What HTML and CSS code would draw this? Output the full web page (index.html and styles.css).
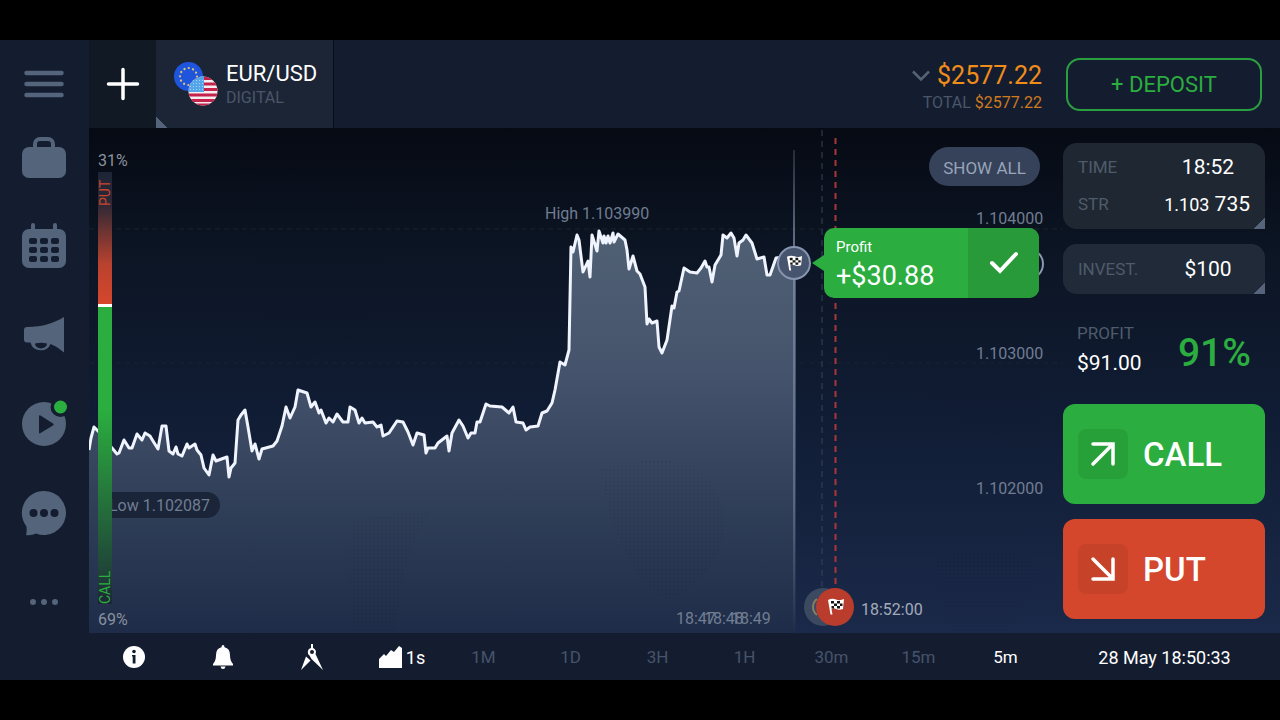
FILE: index.html
```html
<!DOCTYPE html>
<html lang="en">
<head>
    <meta charset="UTF-8">
    <meta name="viewport" content="width=device-width, initial-scale=1.0">
    <title>EUR/USD Digital</title>
    <link rel="stylesheet" href="styles.css">
</head>
<body>
    <div class="app">
        <nav class="sidebar">
            <button class="side-btn menu-btn" aria-label="Menu">
                <svg width="42" height="30" viewBox="0 0 42 30"><path d="M3.500 4H38.500M3.500 15H38.500M3.500 26H38.500" stroke="currentColor" stroke-width="4.500" stroke-linecap="round"/></svg>
            </button>
            <button class="side-btn" aria-label="Portfolio">
                <svg width="46" height="44" viewBox="0 0 46 44"><rect x="1" y="12" width="44" height="31" rx="7" fill="currentColor"/><path d="M14 13V9a5 5 0 0 1 5-5h8a5 5 0 0 1 5 5v4" fill="none" stroke="currentColor" stroke-width="4"/></svg>
            </button>
            <button class="side-btn" aria-label="Calendar">
                <svg width="46" height="46" viewBox="0 0 46 46"><rect x="1" y="6" width="44" height="39" rx="7" fill="currentColor"/><path d="M12 2v6M34 2v6" stroke="currentColor" stroke-width="4" stroke-linecap="round"/><g fill="#141d30"><rect x="8" y="15" width="8" height="6" rx="2"/><rect x="19" y="15" width="8" height="6" rx="2"/><rect x="30" y="15" width="8" height="6" rx="2"/><rect x="8" y="24" width="8" height="6" rx="2"/><rect x="19" y="24" width="8" height="6" rx="2"/><rect x="30" y="24" width="8" height="6" rx="2"/><rect x="8" y="33" width="8" height="6" rx="2"/><rect x="19" y="33" width="8" height="6" rx="2"/><rect x="30" y="33" width="8" height="6" rx="2"/></g></svg>
            </button>
            <button class="side-btn" aria-label="News">
                <svg width="42" height="38" viewBox="0 0 42 38"><path d="M4 11C20 11 31 7 41 1V36.500C36 32.500 32 29.500 27.500 28A10.500 10 0 0 1 7.500 26.500H4a3 3 0 0 1-3-3V14a3 3 0 0 1 3-3Z" fill="currentColor"/><path d="M12 27.500Q18 26 24 27.500A6 5 0 0 1 12 27.500Z" fill="#141d30"/></svg>
            </button>
            <button class="side-btn" aria-label="Video tutorials">
                <svg class="video" width="46" height="46" viewBox="0 0 46 46"><circle cx="23" cy="23" r="22" fill="currentColor"/><path d="M18 15.500V31.500Q18 33 19.500 32L32 24.500Q33.500 23.500 32 22.500L19.500 14.500Q18 13.500 18 15.500Z" fill="#141d30"/><circle cx="39.500" cy="6" r="10" fill="#141d30"/><circle class="dot" cx="39.500" cy="6" r="6.500"/></svg>
            </button>
            <button class="side-btn" aria-label="Chat">
                <svg width="46" height="46" viewBox="0 0 46 46"><path d="M23 1A22 22 0 1 1 15 43.500Q10 46 5 45Q6 42 5.500 36.500A22 22 0 0 1 23 1Z" fill="currentColor"/><g fill="#141d30"><circle cx="12.500" cy="23" r="4"/><circle cx="23" cy="23" r="4"/><circle cx="33.500" cy="23" r="4"/></g></svg>
            </button>
            <button class="side-btn" aria-label="More">
                <svg width="30" height="8" viewBox="0 0 30 8"><g fill="currentColor"><circle cx="4" cy="4" r="3"/><circle cx="15" cy="4" r="3"/><circle cx="26" cy="4" r="3"/></g></svg>
            </button>
        </nav>

        <div class="main">
            <header class="header">
                <button class="add-tab" aria-label="Add asset">
                    <svg width="34" height="34" viewBox="0 0 34 34"><path d="M17 2.500V31.500M2.500 17H31.500" stroke="#fff" stroke-width="3.500" stroke-linecap="round"/></svg>
                </button>
                <button class="asset-tab">
                    <svg width="44" height="44" viewBox="0 0 44 44">
                        <defs>
                            <clipPath id="us"><circle cx="29" cy="29" r="14.500"/></clipPath>
                        </defs>
                        <circle cx="14.500" cy="14.500" r="14.500" fill="#1f55dc"/>
                        <circle cx="14.500" cy="14.500" r="8.500" fill="none" stroke="#d8c679" stroke-width="2.200" stroke-dasharray="0.100 4.350" stroke-linecap="round"/>
                        <g clip-path="url(#us)">
                            <rect x="14" y="14" width="30" height="30" fill="#f4eef2"/>
                            <path d="M14 16.500H44M14 22H44M14 27.500H44M14 33H44M14 38.500H44M14 43H44" stroke="#c4214b" stroke-width="2.800"/>
                            <rect x="14" y="14" width="16" height="16" fill="#55a5ea"/>
                            <path d="M16 18.500H30M16 21.500H30M16 24.500H30M16 27.500H30" stroke="#a5d2f5" stroke-width="1" stroke-dasharray="1 2"/>
                        </g>
                    </svg>
                    <span class="asset-text">
                        <span class="asset-name">EUR/USD</span>
                        <span class="asset-type">DIGITAL</span>
                    </span>
                </button>
                <div class="account">
                    <button class="balance">
                        <svg width="20" height="12" viewBox="0 0 20 12"><path d="M2 1.500L10 9.500L18 1.500" fill="none" stroke="#566376" stroke-width="2.500"/></svg>
                        $2577.22
                    </button>
                    <div class="total">TOTAL <span>$2577.22</span></div>
                </div>
                <button class="deposit">+ DEPOSIT</button>
            </header>

            <section class="stage">
                <svg class="chart" viewBox="89 128 1191 505" preserveAspectRatio="xMidYMid slice">
                    <defs>
                        <linearGradient id="area" gradientUnits="userSpaceOnUse" x1="0" y1="230" x2="0" y2="633">
                            <stop offset="0" stop-color="#506074"/>
                            <stop offset="0.350" stop-color="#45546c"/>
                            <stop offset="0.620" stop-color="#34435b"/>
                            <stop offset="1" stop-color="#1e2c49"/>
                        </linearGradient>
                        <linearGradient id="putBar" x1="0" y1="0" x2="0" y2="1">
                            <stop offset="0" stop-color="#d5472d" stop-opacity="0"/>
                            <stop offset="0.250" stop-color="#d5472d" stop-opacity="0.100"/>
                            <stop offset="0.700" stop-color="#d5472d" stop-opacity="0.850"/>
                            <stop offset="1" stop-color="#d5472d"/>
                        </linearGradient>
                        <linearGradient id="callBar" x1="0" y1="0" x2="0" y2="1">
                            <stop offset="0" stop-color="#2bad3f"/>
                            <stop offset="0.350" stop-color="#2bad3f"/>
                            <stop offset="0.880" stop-color="#2bad3f" stop-opacity="0.250"/>
                            <stop offset="1" stop-color="#2bad3f" stop-opacity="0"/>
                        </linearGradient>
                        <linearGradient id="nowLine" gradientUnits="userSpaceOnUse" x1="0" y1="150" x2="0" y2="633">
                            <stop offset="0" stop-color="#66758c" stop-opacity="0.300"/>
                            <stop offset="0.250" stop-color="#74839b"/>
                            <stop offset="0.700" stop-color="#5c6b83"/>
                            <stop offset="1" stop-color="#5c6b83" stop-opacity="0"/>
                        </linearGradient>
                        <pattern id="dots" width="4" height="4" patternUnits="userSpaceOnUse">
                            <circle cx="2" cy="2" r="1" fill="#0a1222"/>
                        </pattern>
                        <symbol id="flag" viewBox="0 0 18 18">
                            <path d="M1 3Q5 1 9 2.500T17 2L16 12Q12 13.500 9 12T4.500 12.500L5.500 17.500H3.500Z" fill="#fff"/>
                            <path d="M4 4h3v2.500H4zM10 4h3v2.500h-3zM7 6.500h3V9H7zM13 6.500h2.500V9H13zM4.500 9H7v2.500H4.500zM10 9h3v2.500h-3z" fill="#161616"/>
                        </symbol>
                    </defs>

                    <path class="grid-line" d="M89 229H1063M89 363H1063"/>
                    <path fill="url(#area)" d="M89 450L91 438L94 427L99 432L105 440L112 448L117 454L119 453L124 440L129 448L132 448L137 434L142 440L145 433L150 436L153 441L158 449L162 426L166 426L169 451L173 454L176 447L178 454L182 456L187 444L189 448L195 444L197 450L201 455L204 468L209 475L213 455L216 461L227 457L229 477L231 468L235 463L238 420L241 415L245 410L248 427L252 451L255 444L259 459L262 449L273 446L277 441L282 426L286 407L290 418L295 407L298 390L307 393L311 407L315 402L319 413L321 410L326 423L329 418L333 422L337 414L343 422L348 422L350 407L355 410L359 423L362 418L365 423L373 422L377 427L381 425L383 436L389 433L397 421L403 422L408 432L413 445L417 433L424 435L426 453L428 448L435 448L438 443L447 436L449 451L452 433L459 420L463 426L468 438L471 433L475 433L477 422L480 422L486 404L490 406L502 407L509 413L513 407L516 422L523 423L526 430L530 427L538 426L542 413L547 411L552 403L555 390L560 362L565 365L569 350L571 247L573 252L577 235L579 240L583 272L588 261L590 277L592 235L597 251L599 231L603 243L604 236L606 243L608 236L610 243L613 233L614 242L618 234L625 240L627 250L629 269L633 256L637 271L640 274L645 287L647 324L649 319L652 323L657 321L659 347L662 353L667 340L672 306L674 308L677 292L679 291L684 268L690 272L697 273L701 268L705 261L707 267L709 267L712 282L715 265L721 255L723 235L727 238L731 233L734 238L737 256L739 243L743 240L746 235L752 243L757 259L764 257L767 275L770 275L776 258L783 257L796 262V633H89Z"/>
                    <g fill="url(#dots)" opacity="0.120">
                        <path d="M230 175Q330 150 370 240T300 360Q260 330 250 270Z"/>
                        <path d="M350 520L430 510Q400 560 395 633H350Z"/>
                        <path d="M600 470Q700 440 720 500T670 600Q620 580 600 470Z"/>
                        <path d="M880 350Q960 300 1040 340V450Q940 430 880 350Z"/>
                        <path d="M935 560Q1000 530 1040 570L1010 633H950Z"/>
                    </g>
                    <path class="price-line" d="M89 450L91 438L94 427L99 432L105 440L112 448L117 454L119 453L124 440L129 448L132 448L137 434L142 440L145 433L150 436L153 441L158 449L162 426L166 426L169 451L173 454L176 447L178 454L182 456L187 444L189 448L195 444L197 450L201 455L204 468L209 475L213 455L216 461L227 457L229 477L231 468L235 463L238 420L241 415L245 410L248 427L252 451L255 444L259 459L262 449L273 446L277 441L282 426L286 407L290 418L295 407L298 390L307 393L311 407L315 402L319 413L321 410L326 423L329 418L333 422L337 414L343 422L348 422L350 407L355 410L359 423L362 418L365 423L373 422L377 427L381 425L383 436L389 433L397 421L403 422L408 432L413 445L417 433L424 435L426 453L428 448L435 448L438 443L447 436L449 451L452 433L459 420L463 426L468 438L471 433L475 433L477 422L480 422L486 404L490 406L502 407L509 413L513 407L516 422L523 423L526 430L530 427L538 426L542 413L547 411L552 403L555 390L560 362L565 365L569 350L571 247L573 252L577 235L579 240L583 272L588 261L590 277L592 235L597 251L599 231L603 243L604 236L606 243L608 236L610 243L613 233L614 242L618 234L625 240L627 250L629 269L633 256L637 271L640 274L645 287L647 324L649 319L652 323L657 321L659 347L662 353L667 340L672 306L674 308L677 292L679 291L684 268L690 272L697 273L701 268L705 261L707 267L709 267L712 282L715 265L721 255L723 235L727 238L731 233L734 238L737 256L739 243L743 240L746 235L752 243L757 259L764 257L767 275L770 275L776 258L783 257"/>

                    <!-- current time, purchase deadline, expiration -->
                    <rect x="793" y="150" width="2" height="483" fill="url(#nowLine)"/>
                    <path class="deadline-line" d="M822 130V590"/>
                    <path class="expiry-line" d="M835.500 138V590"/>

                    <rect x="100" y="492" width="120" height="26" rx="13" fill="#1a2539"/>
                    <text class="label" x="109" y="511">Low 1.102087</text>
                    <text class="label" x="545" y="219">High 1.103990</text>

                    <!-- traders mood -->
                    <rect x="98" y="172" width="14" height="432" fill="#1c2536"/>
                    <rect x="98" y="172" width="14" height="132" fill="url(#putBar)"/>
                    <rect x="98" y="307" width="14" height="297" fill="url(#callBar)"/>
                    <rect x="98" y="304" width="14" height="3" fill="#fff"/>
                    <text class="mood put-text" transform="translate(110 206) rotate(-90)">PUT</text>
                    <text class="mood call-text" transform="translate(110 604) rotate(-90)">CALL</text>
                    <text class="percent" x="98" y="166">31%</text>
                    <text class="percent" x="98" y="625">69%</text>

                    <text class="label" x="976" y="224">1.104000</text>
                    <text class="label" x="976" y="359">1.103000</text>
                    <text class="label" x="976" y="494">1.102000</text>

                    <text class="label" x="676" y="624">18:47</text>
                    <text class="label" x="704" y="624">18:48</text>
                    <text class="label" x="731" y="624">18:49</text>

                    <circle cx="823" cy="607" r="19" fill="#3b4961"/>
                    <path d="M817 599a10 10 0 0 0 0 16" fill="none" stroke="#867d62" stroke-width="2"/>
                    <circle cx="835" cy="607" r="19" fill="#b93c2c"/>
                    <use href="#flag" x="827" y="597" width="18" height="18"/>
                    <text class="expiry-text" x="861" y="615">18:52:00</text>

                    <circle cx="1028" cy="264" r="15" fill="none" stroke="#8a98b3" stroke-width="2"/>
                    <circle cx="794" cy="263" r="16" fill="#46546d" stroke="#8795b0" stroke-width="2"/>
                    <use href="#flag" x="786" y="254" width="17" height="17"/>
                </svg>

                <button class="show-all">SHOW ALL</button>

                <div class="deal">
                    <div class="deal-info">
                        <span class="deal-label">Profit</span>
                        <span class="deal-value">+$30.88</span>
                    </div>
                    <button class="deal-close" aria-label="Close deal">
                        <svg width="30" height="24" viewBox="0 0 30 24"><path d="M3 12L11 20L27 3" fill="none" stroke="#fff" stroke-width="4" stroke-linecap="round"/></svg>
                    </button>
                </div>

                <aside class="panel">
                    <button class="card option-card">
                        <span class="row"><span class="caption">TIME</span><span class="value center">18:52</span></span>
                        <span class="row"><span class="caption">STR</span><span class="value"><small>1.103</small> 735</span></span>
                    </button>
                    <button class="card invest-card">
                        <span class="row"><span class="caption">INVEST.</span><span class="value center">$100</span></span>
                    </button>
                    <div class="profit">
                        <div>
                            <div class="caption">PROFIT</div>
                            <div class="value">$91.00</div>
                        </div>
                        <div class="profit-percent">91%</div>
                    </div>
                    <button class="trade call">
                        <span class="arrow"><svg width="26" height="26" viewBox="0 0 26 26"><path d="M3 3H23V23M22 4L3 23" fill="none" stroke="#fff" stroke-width="3.500" stroke-linecap="round"/></svg></span>
                        CALL
                    </button>
                    <button class="trade put">
                        <span class="arrow"><svg width="26" height="26" viewBox="0 0 26 26"><path d="M3 23H23V3M22 22L3 3" fill="none" stroke="#fff" stroke-width="3.500" stroke-linecap="round"/></svg></span>
                        PUT
                    </button>
                </aside>
            </section>

            <footer class="toolbar">
                <button class="tool" aria-label="Info">
                    <svg width="22" height="22" viewBox="0 0 22 22"><circle cx="11" cy="11" r="11" fill="#fff"/><circle cx="11" cy="5.500" r="1.800" fill="#141d30"/><path d="M9 9H12.500V17.500H9.700V10.500H9Z" fill="#141d30"/></svg>
                </button>
                <button class="tool" aria-label="Alerts">
                    <svg width="20" height="24" viewBox="0 0 20 24"><path d="M10 0Q11.500 0 11.500 2.200Q17 3.500 17 10Q17 16 20 19V20.500H0V19Q3 16 3 10Q3 3.500 8.500 2.200Q8.500 0 10 0ZM7.500 21.500H12.500Q12 24 10 24T7.500 21.500Z" fill="#fff"/></svg>
                </button>
                <button class="tool" aria-label="Drawing tools">
                    <svg width="22" height="26" viewBox="0 0 22 26"><path d="M10 0H12V4A4.200 4.200 0 0 1 14.500 10L22 26L10.500 15L8.500 11.500A4.200 4.200 0 0 1 10 4ZM5 12.500L9.500 16.500L0 26Z" fill="#fff"/><circle cx="11" cy="8" r="2" fill="#141d30"/></svg>
                </button>
                <button class="tool chart-type">
                    <svg width="23" height="22" viewBox="0 0 23 22"><path d="M0 22V13L5 8L7 10L12 4L15 6L20 0L23 2V22Z" fill="#fff"/></svg>
                    1s
                </button>
                <button class="frame">1M</button>
                <button class="frame">1D</button>
                <button class="frame">3H</button>
                <button class="frame">1H</button>
                <button class="frame">30m</button>
                <button class="frame">15m</button>
                <button class="frame active">5m</button>
                <time class="clock">28 May 18:50:33</time>
            </footer>
        </div>
    </div>
</body>
</html>
```
FILE: styles.css
```css
* {
    box-sizing: border-box;
}
body {
    margin: 0;
    padding: 40px 0;
    background-color: #000;
    color: #fff;
    font-family: Roboto, "Liberation Sans", sans-serif;
}
button {
    margin: 0;
    padding: 0;
    border: 0;
    background: none;
    color: inherit;
    font: inherit;
    cursor: pointer;
}
svg {
    display: block;
}
.app {
    display: flex;
    min-height: calc(100vh - 80px);
    background-color: #141d30;
}

/* left menu */
.sidebar {
    display: flex;
    flex-direction: column;
    width: 88px;
    margin-right: 1px;
    padding-top: 16px;
    color: #54647a;
}
.side-btn {
    display: flex;
    align-items: center;
    justify-content: center;
    height: 89px;
}
.side-btn svg {
    margin-bottom: 3px;
}
.menu-btn {
    height: 58px;
}
.dot {
    fill: #2bad3f;
}
.video {
    overflow: visible;
}
.main {
    display: flex;
    flex-direction: column;
    flex: 1;
    min-width: 0;
}

/* header */
.header {
    display: flex;
    align-items: center;
    height: 88px;
    padding-right: 18px;
}
.add-tab {
    display: flex;
    align-items: center;
    justify-content: center;
    width: 67px;
    height: 100%;
    background-color: #101924;
}
.asset-tab {
    display: flex;
    align-items: center;
    gap: 8px;
    width: 178px;
    height: 100%;
    padding-left: 18px;
    border-right: 1px solid #080d18;
    background: linear-gradient(45deg, #56647b 8px, #1c2536 8px);
    text-align: left;
}
.asset-text {
    display: flex;
    flex-direction: column;
    padding-top: 4px;
}
.asset-name {
    font-size: 22px;
    line-height: 24px;
}
.asset-type {
    color: #4a5669;
    font-size: 16px;
    line-height: 24px;
}
.account {
    margin-left: auto;
    margin-right: 24px;
    padding-top: 8px;
    text-align: right;
}
.balance {
    display: flex;
    align-items: center;
    justify-content: flex-end;
    gap: 6px;
    width: 100%;
    color: #f08c1a;
    font-size: 25px;
    line-height: 30px;
}
.total {
    color: #4a5669;
    font-size: 16px;
    line-height: 24px;
}
.total span {
    color: #cf7a1c;
}
.deposit {
    width: 196px;
    height: 53px;
    border: 2px solid #2a9f40;
    border-radius: 14px;
    color: #2bad3f;
    font-size: 22px;
}

/* chart */
.stage {
    position: relative;
    display: flex;
    flex: 1;
    justify-content: flex-end;
    background: linear-gradient(#060a13, #0c1524 25%, #101c33 55%, #1b294a);
}
.chart {
    position: absolute;
    inset: 0;
    width: 100%;
    height: 100%;
    font-size: 16px;
}
.grid-line {
    stroke: #182232;
    stroke-dasharray: 5 4;
}
.price-line {
    fill: none;
    stroke: #f0f4ff;
    stroke-width: 3;
    stroke-linejoin: round;
}
.deadline-line {
    stroke: #37435a;
    stroke-dasharray: 6 5;
}
.expiry-line {
    stroke: #a8363a;
    stroke-width: 2;
    stroke-dasharray: 6 5;
}
.label {
    fill: #717d91;
}
.percent {
    fill: #8a919e;
}
.mood {
    font-size: 14px;
}
.put-text {
    fill: #c8452f;
}
.call-text {
    fill: #2bad3f;
}
.expiry-text {
    fill: #a3abba;
}
.show-all {
    position: absolute;
    top: 19px;
    right: 240px;
    width: 111px;
    height: 39px;
    padding-top: 2px;
    border-radius: 20px;
    background-color: #354259;
    color: #97a4ba;
    font-size: 17px;
}
.deal {
    position: absolute;
    top: 100px;
    right: 241px;
    display: flex;
    width: 215px;
    height: 70px;
    border-radius: 10px;
    background-color: #2bad3f;
}
.deal::before {
    content: "";
    position: absolute;
    top: 27px;
    left: -12px;
    border: 8px solid transparent;
    border-left-width: 0;
    border-right: 12px solid #2bad3f;
}
.deal-info {
    display: flex;
    flex: 1;
    flex-direction: column;
    padding: 10px 12px;
}
.deal-label {
    font-size: 15px;
    line-height: 18px;
}
.deal-value {
    font-size: 27px;
    line-height: 40px;
}
.deal-close {
    display: flex;
    align-items: center;
    justify-content: center;
    width: 71px;
    border-radius: 0 10px 10px 0;
    background-color: #289a3a;
}

/* trading panel */
.panel {
    position: relative;
    display: flex;
    flex-direction: column;
    gap: 15px;
    width: 217px;
    padding: 15px 15px 14px 0;
}
.card {
    display: flex;
    flex-direction: column;
    justify-content: space-around;
    padding: 6px 15px;
    border-radius: 14px 14px 0 14px;
    background: linear-gradient(-45deg, #56647b 8px, #1f2832 8px);
}
.option-card {
    height: 86px;
}
.invest-card {
    height: 50px;
    background: linear-gradient(-45deg, #56647b 8px, #202a38 8px);
}
.row {
    display: flex;
    align-items: center;
    justify-content: space-between;
    line-height: 30px;
}
.caption {
    color: #4f5b6b;
    font-size: 17px;
}
.value {
    font-size: 21px;
}
.value small {
    font-size: 18px;
}
.center {
    width: 84px;
    text-align: center;
}
.profit {
    display: flex;
    flex: 1;
    align-items: flex-start;
    justify-content: space-between;
    padding: 9px 14px 0;
    line-height: 30px;
}
.profit-percent {
    padding-top: 20px;
    color: #2bad3f;
    font-size: 39px;
    font-weight: 500;
}
.trade {
    display: flex;
    align-items: center;
    gap: 15px;
    height: 100px;
    padding-left: 15px;
    border-radius: 12px;
    font-size: 33px;
    font-weight: 500;
}
.arrow {
    display: flex;
    align-items: center;
    justify-content: center;
    width: 50px;
    height: 50px;
    border-radius: 8px;
    background-color: rgba(0, 0, 0, 0.07);
}
.call {
    background-color: #2bad3f;
}
.put {
    background-color: #d5472d;
}

/* bottom bar */
.toolbar {
    display: grid;
    grid-template-columns: repeat(3, 89fr) 84fr repeat(7, 87fr) 231fr;
    align-items: center;
    height: 47px;
    padding-top: 1px;
    font-size: 18px;
}
.tool {
    display: flex;
    align-items: center;
    justify-content: center;
    gap: 4px;
}
.chart-type {
    padding-left: 8px;
}
.frame {
    color: #46536a;
    font-size: 17px;
}
.active {
    color: #fff;
}
.clock {
    text-align: center;
}
```
